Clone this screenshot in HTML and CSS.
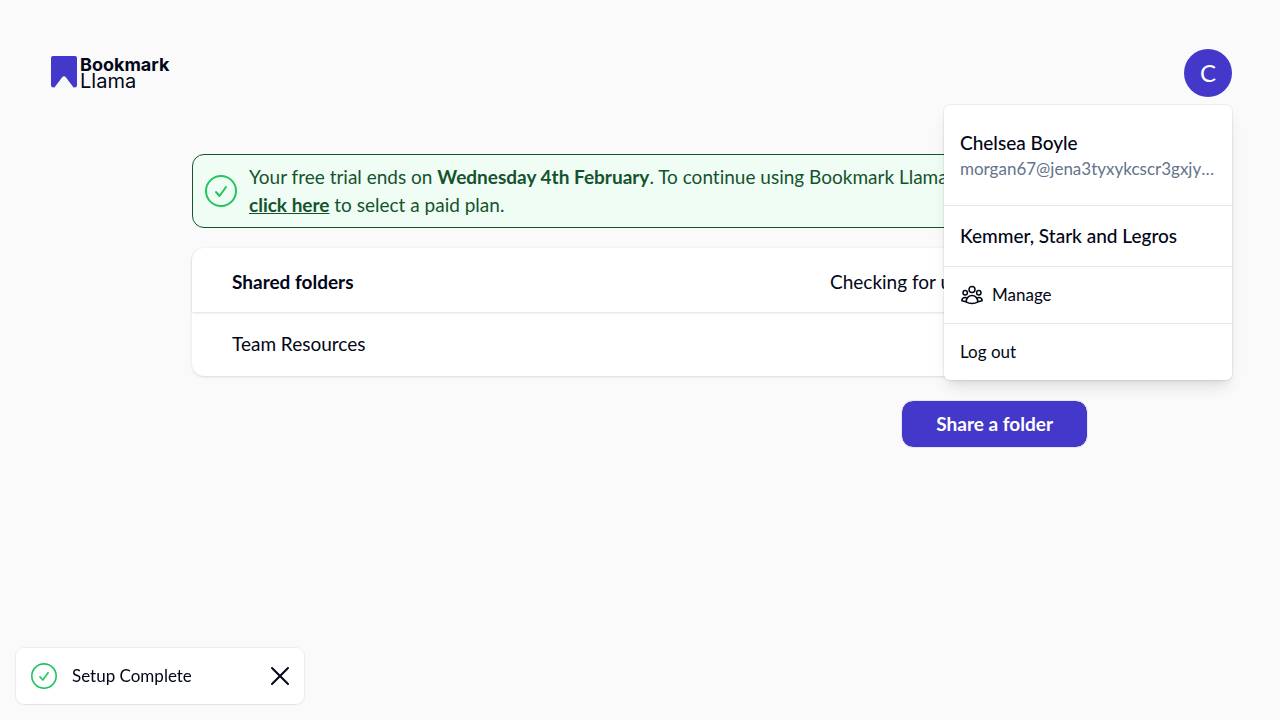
FILE: index.html
```html
<!DOCTYPE html>
<html lang="en">
<head>
<meta charset="utf-8">
<meta name="viewport" content="width=device-width, initial-scale=1">
<title>Bookmark Llama</title>
<link rel="stylesheet" href="styles.css">
</head>
<body>
<header class="topbar">
  <a class="logo" href="#">
    <svg class="logo-mark" viewBox="0 0 26 32" aria-hidden="true"><path d="M2 0H24Q26 0 26 2V29Q26 31.500 23.500 31.500Q22.500 31.500 21.800 30.500L15 21.500Q13 19 11 21.500L4.200 30.500Q3.500 31.500 2.500 31.500Q0 31.500 0 29V2Q0 0 2 0Z" fill="#4338ca"/></svg>
    <span class="logo-text"><span class="logo-bold">Bookmark</span><span class="logo-light">Llama</span></span>
  </a>
  <div class="account">
    <button class="avatar" type="button" aria-haspopup="true" aria-expanded="true">C</button>
    <div class="menu">
      <div class="menu-user">
        <div class="menu-title">Chelsea Boyle</div>
        <div class="menu-email">morgan67@jena3tyxykcscr3gxjyw.com</div>
      </div>
      <div class="menu-org menu-title">Kemmer, Stark and Legros</div>
      <a class="menu-item" href="#">
        <svg class="people" viewBox="0 0 24 24" aria-hidden="true"><circle cx="12" cy="6.500" r="3"/><circle cx="5.200" cy="9.800" r="2.200"/><circle cx="18.800" cy="9.800" r="2.200"/><path d="M12 12.600c-3.100 0-5.300 2.200-6 6.200 1.800 1.100 3.800 1.700 6 1.700s4.200-.6 6-1.700c-.7-4-2.900-6.200-6-6.200z"/><path d="M6.900 15.400c-.6-.6-1.200-.8-1.900-.8-1.700 0-2.900 1.200-3.200 3 1.200.6 2.500.9 4.200.8M17.100 15.400c.6-.6 1.200-.8 1.900-.8 1.700 0 2.900 1.200 3.200 3-1.200.6-2.500.9-4.200.8"/></svg>
        <span>Manage</span>
      </a>
      <button class="menu-item" type="button">Log out</button>
    </div>
  </div>
</header>
<main class="content">
  <div class="alert">
    <svg class="check" viewBox="0 0 32 32" aria-hidden="true"><circle cx="16" cy="16" r="15"/><path d="M11 17L14.500 21L21 12"/></svg>
    <p class="alert-text">Your free trial ends on <strong>Wednesday 4th February</strong>. To continue using Bookmark Llama<br><a href="#">click here</a> to select a paid plan.</p>
  </div>
  <section class="card">
    <div class="card-head"><h2>Shared folders</h2><p class="status">Checking for updates</p></div>
    <div class="card-row">Team Resources</div>
  </section>
  <div class="actions"><button class="primary" type="button">Share a folder</button></div>
</main>
<div class="toast" role="status">
  <svg class="check check-small" viewBox="0 0 32 32" aria-hidden="true"><circle cx="16" cy="16" r="15"/><path d="M11 17L14.500 21L21 12"/></svg>
  <span class="toast-text">Setup Complete</span>
  <button class="close" type="button" aria-label="Close"><svg viewBox="0 0 24 24" aria-hidden="true"><path d="M4 4L20 20M20 4L4 20"/></svg></button>
</div>
</body>
</html>
```
FILE: styles.css
```css
* { box-sizing: border-box; }
body {
  margin: 0;
  min-height: 100vh;
  background: #fafafa;
  color: #020617;
  font-family: Lato, "Open Sans", sans-serif;
  font-size: 19px;
  font-variant-ligatures: none;
  line-height: 28px;
}
button { font: inherit; color: inherit; border: 0; background: none; cursor: pointer; }
a { color: inherit; }
h2, p { margin: 0; }
.topbar { display: flex; justify-content: space-between; align-items: center; padding: 49px 48px 0; }
.logo { display: flex; gap: 3px; padding-left: 3px; text-decoration: none; }
.logo-mark { width: 26px; height: 32px; }
.logo-text { display: flex; flex-direction: column; font-family: Inter, sans-serif; font-size: 18px; line-height: 17px; }
.logo-bold { font-weight: 700; }
.logo-light { font-size: 20px; }
.account { position: relative; }
.avatar { display: block; width: 48px; height: 48px; padding: 0; border-radius: 50%; background: #4338ca; color: #fff; font-size: 24px; }
.menu {
  position: absolute;
  z-index: 2;
  top: 56px;
  right: 0;
  width: 288px;
  background: #fff;
  border-radius: 6px;
  box-shadow: 0 0 0 1px rgba(0, 0, 0, .05), 0 10px 15px -3px rgba(0, 0, 0, .1), 0 4px 6px -4px rgba(0, 0, 0, .1);
}
.menu-title { font-weight: 500; }
.menu-user { padding: 24px 16px; }
.menu-email { overflow: hidden; text-overflow: ellipsis; white-space: nowrap; color: #64748b; font-size: 17px; line-height: 24px; }
.menu-org { padding: 16px; border-top: 1px solid #e5e7eb; }
.menu-item { display: flex; align-items: center; gap: 8px; width: 100%; padding: 16px; border-top: 1px solid #e5e7eb; text-align: left; text-decoration: none; font-size: 17px; line-height: 24px; }
.people { width: 24px; height: 24px; fill: none; stroke: #020617; stroke-width: 1.5; stroke-linejoin: round; }
.content { width: 100%; max-width: 896px; margin: 57px auto 0; }
.alert { display: flex; align-items: center; gap: 12px; padding: 8px 12px; border: 1px solid #14532d; border-radius: 12px; background: #f0fdf4; color: #14532d; }
.alert-text strong, .alert-text a { font-weight: 700; }
.check { flex: none; width: 32px; height: 32px; fill: none; stroke: #22c55e; stroke-width: 2; stroke-linecap: round; stroke-linejoin: round; }
.card { margin-top: 20px; border-radius: 12px; background: #fff; box-shadow: 0 1px 3px rgba(0, 0, 0, .1), 0 1px 2px -1px rgba(0, 0, 0, .1); }
.card-head { display: flex; justify-content: space-between; padding: 20px 40px 16px; border-radius: 12px 12px 0 0; box-shadow: 0 1px 3px rgba(0, 0, 0, .1), 0 1px 2px -1px rgba(0, 0, 0, .1); }
.card-head h2 { font-size: 19px; font-weight: 700; }
.status { width: 218px; }
.card-row { padding: 18px 40px; }
.actions { display: flex; justify-content: flex-end; margin-top: 24px; }
.primary { padding: 9px 34px; border: 1px solid #e2e8f0; border-radius: 12px; background: #4338ca; background-clip: padding-box; color: #fff; font-weight: 700; }
.toast { position: fixed; left: 16px; bottom: 16px; display: flex; align-items: center; width: 288px; padding: 16px 12px 16px 15px; border-radius: 8px; background: #fff; box-shadow: 0 0 0 1px rgba(0, 0, 0, .05), 0 1px 2px rgba(0, 0, 0, .05); font-size: 17px; line-height: 24px; }
.check-small { width: 26px; height: 26px; margin: -1px 0; }
.toast-text { flex: 1; margin-left: 15px; }
.close { width: 24px; height: 24px; padding: 0; }
.close svg { display: block; width: 24px; height: 24px; fill: none; stroke: #020617; stroke-width: 2; stroke-linecap: round; }
```
